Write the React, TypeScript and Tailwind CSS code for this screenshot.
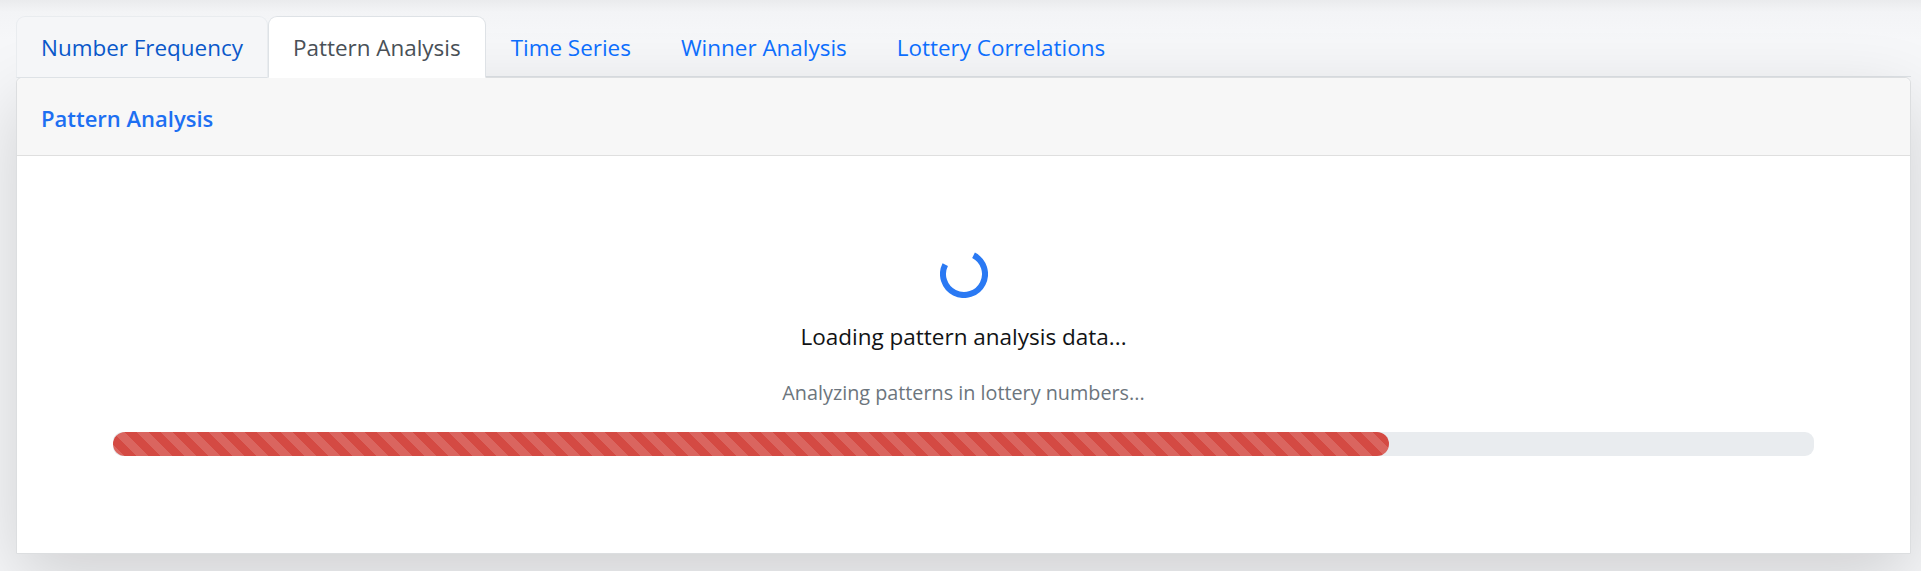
import React from "react";

const tabs = [
  { label: "Number Frequency", state: "hover" },
  { label: "Pattern Analysis", state: "active" },
  { label: "Time Series", state: "idle" },
  { label: "Winner Analysis", state: "idle" },
  { label: "Lottery Correlations", state: "idle" },
];

function Spinner() {
  const r = 21;
  const c = 2 * Math.PI * r;
  const arc = (268 / 360) * c;
  return (
    <svg width="48" height="48" viewBox="0 0 48 48" className="block">
      <circle
        cx="24"
        cy="24"
        r={r}
        fill="none"
        stroke="#2a79f3"
        strokeWidth="6"
        strokeDasharray={`${arc} ${c - arc}`}
        transform="rotate(297 24 24)"
      />
    </svg>
  );
}

export default function App() {
  return (
    <div
      className="min-h-[571px] w-full bg-[linear-gradient(to_bottom,#eaebed_0px,#f3f4f6_12px,#f6f7f9_40px)] pl-4 pr-[10px] pt-4 overflow-hidden"
      style={{ fontFamily: '"Open Sans", "Noto Sans", sans-serif' }}
    >
      {/* Tabs */}
      <div className="flex h-[61px] border-b border-[#dee2e6]">
        {tabs.map((t) => {
          const base =
            "-mb-px flex h-[62px] items-center px-6 pt-[2px] text-[22.45px] leading-[36px] rounded-t-[9px] border";
          const cls =
            t.state === "active"
              ? "bg-white text-[#495057] border-[#dee2e6] border-b-white"
              : t.state === "hover"
              ? "bg-[#f5f6f8] text-[#0a58ca] border-[#e9ecef] border-b-[#dee2e6]"
              : "text-[#0d6efd] border-transparent";
          return (
            <div key={t.label} className={`${base} ${cls}`}>
              {t.label}
            </div>
          );
        })}
      </div>

      {/* Card */}
      <div className="rounded-t-[6px] border border-[#dcdee0] bg-white shadow-[0_24px_72px_rgba(0,0,0,0.16)]">
        <div className="flex h-[78px] items-center border-b border-[#dfdfdf] bg-[#f7f7f7] px-6 pt-[4px] rounded-t-[6px]">
          <span className="text-[22px] font-semibold text-[#1d6ff2]">Pattern Analysis</span>
        </div>
        <div className="flex flex-col items-center px-24 pt-[94px] pb-[97px]">
          <Spinner />
          <p className="mt-[21px] text-[22.5px] leading-[36px] text-[#111315]">
            Loading pattern analysis data...
          </p>
          <p className="mt-[23px] text-[19.8px] leading-[30px] text-[#6c757d]">
            Analyzing patterns in lottery numbers...
          </p>
          <div className="mt-[24px] h-6 w-full rounded-[9px] bg-[#e9ecef]">
            <div
              className="h-6 rounded-full bg-[#d44a43] bg-[linear-gradient(45deg,rgba(255,255,255,0.15)_25%,transparent_25%,transparent_50%,rgba(255,255,255,0.15)_50%,rgba(255,255,255,0.15)_75%,transparent_75%,transparent)] bg-[length:24px_24px]"
              style={{ width: "75%" }}
            />
          </div>
        </div>
      </div>
    </div>
  );
}
